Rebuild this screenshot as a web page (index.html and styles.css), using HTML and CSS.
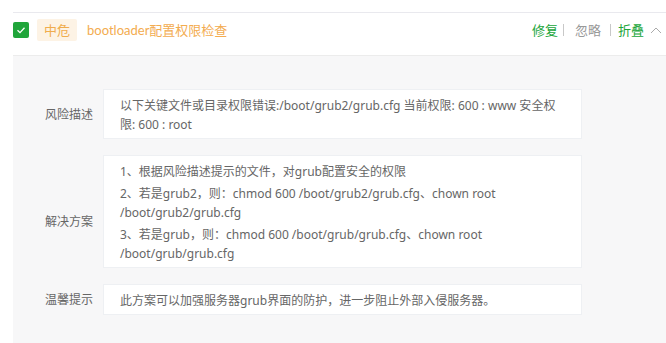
FILE: index.html
```html
<!DOCTYPE html>
<html lang="zh-CN">
<head>
<meta charset="utf-8">
<title>bootloader配置权限检查</title>
<link rel="stylesheet" href="styles.css">
</head>
<body>
<div class="wrap">
  <div class="header">
    <span class="checkbox">
      <svg width="16" height="16" viewBox="0 0 16 16"><polyline points="4.5,8.2 7,10.6 11.5,5.8" fill="none" stroke="#fff" stroke-width="1.3"/></svg>
    </span>
    <span class="tag">中危</span>
    <span class="title">bootloader配置权限检查</span>
    <div class="actions">
      <a class="act green">修复</a><span class="sep sep-tight"></span>
      <a class="act gray">忽略</a><span class="sep"></span>
      <a class="act green">折叠</a>
      <svg class="chev" width="12" height="8" viewBox="0 0 12 8"><polyline points="1,7 6,2 11,7" fill="none" stroke="#aaa" stroke-width="1"/></svg>
    </div>
  </div>
  <div class="detail">
    <div class="row">
      <div class="label">风险描述</div>
      <div class="box"><p>以下关键文件或目录权限错误:/boot/grub2/grub.cfg 当前权限: 600 : www 安全权限: 600 : root</p></div>
    </div>
    <div class="row">
      <div class="label label-low">解决方案</div>
      <div class="box">
        <p>1、根据风险描述提示的文件，对grub配置安全的权限</p>
        <p>2、若是grub2，则：chmod 600 /boot/grub2/grub.cfg、chown root /boot/grub2/grub.cfg</p>
        <p>3、若是grub，则：chmod 600 /boot/grub/grub.cfg、chown root /boot/grub/grub.cfg</p>
      </div>
    </div>
    <div class="row">
      <div class="label">温馨提示</div>
      <div class="box"><p>此方案可以加强服务器grub界面的防护，进一步阻止外部入侵服务器。</p></div>
    </div>
  </div>
</div>
</body>
</html>
```
FILE: styles.css
```css
html, body {
  margin: 0;
  padding: 0;
  background: #fff;
  font-family: "Noto Sans", "Noto Sans CJK SC", sans-serif;
  font-size: 12px;
  color: #666;
}
.wrap {
  margin: 12px 0 0 13px;
}
.header {
  display: flex;
  align-items: center;
  border-top: 1px solid #e9e9ee;
  border-bottom: 1px solid #ececec;
  padding: 6px 4px 14px 0;
  font-size: 13px;
}
.checkbox {
  width: 16px;
  height: 16px;
  background: #20a53a;
  border-radius: 2px;
  display: block;
  margin-right: 8px;
}
.checkbox svg { display: block; }
.tag {
  height: 22px;
  line-height: 22px;
  padding: 0 7px;
  background: #fdf3e5;
  color: #f0ad4e;
  border-radius: 2px;
  margin-right: 10px;
}
.title {
  font-family: "Lato", "Noto Sans CJK SC", sans-serif;
  color: #f3ac50;
  line-height: 22px;
}
.actions {
  margin-left: auto;
  display: flex;
  align-items: center;
  line-height: 22px;
}
.act { cursor: pointer; }
.green { color: #20a53a; }
.gray { color: #999; }
.sep {
  display: block;
  width: 1px;
  height: 12px;
  background: #c8c8c8;
  margin: 0 7px 0 9px;
}
.sep-tight { margin: 0 11px 0 5px; }
.chev {
  display: block;
  margin-left: 6px;
}
.detail {
  background: #f7f7f8;
  padding: 33px 0 40px;
  display: flex;
  flex-direction: column;
  gap: 16px;
}
.row {
  display: grid;
  grid-template-columns: 80px 479px;
  column-gap: 10px;
  align-items: center;
}
.label {
  text-align: right;
  line-height: 19px;
}
.label-low { padding-top: 20px; }
.box {
  background: #fff;
  border: 1px solid #eef0f3;
  padding: 6px 16px 4px;
  line-height: 19px;
}
.box p {
  margin: 0;
}
.box p + p {
  margin-top: 3px;
}
```
